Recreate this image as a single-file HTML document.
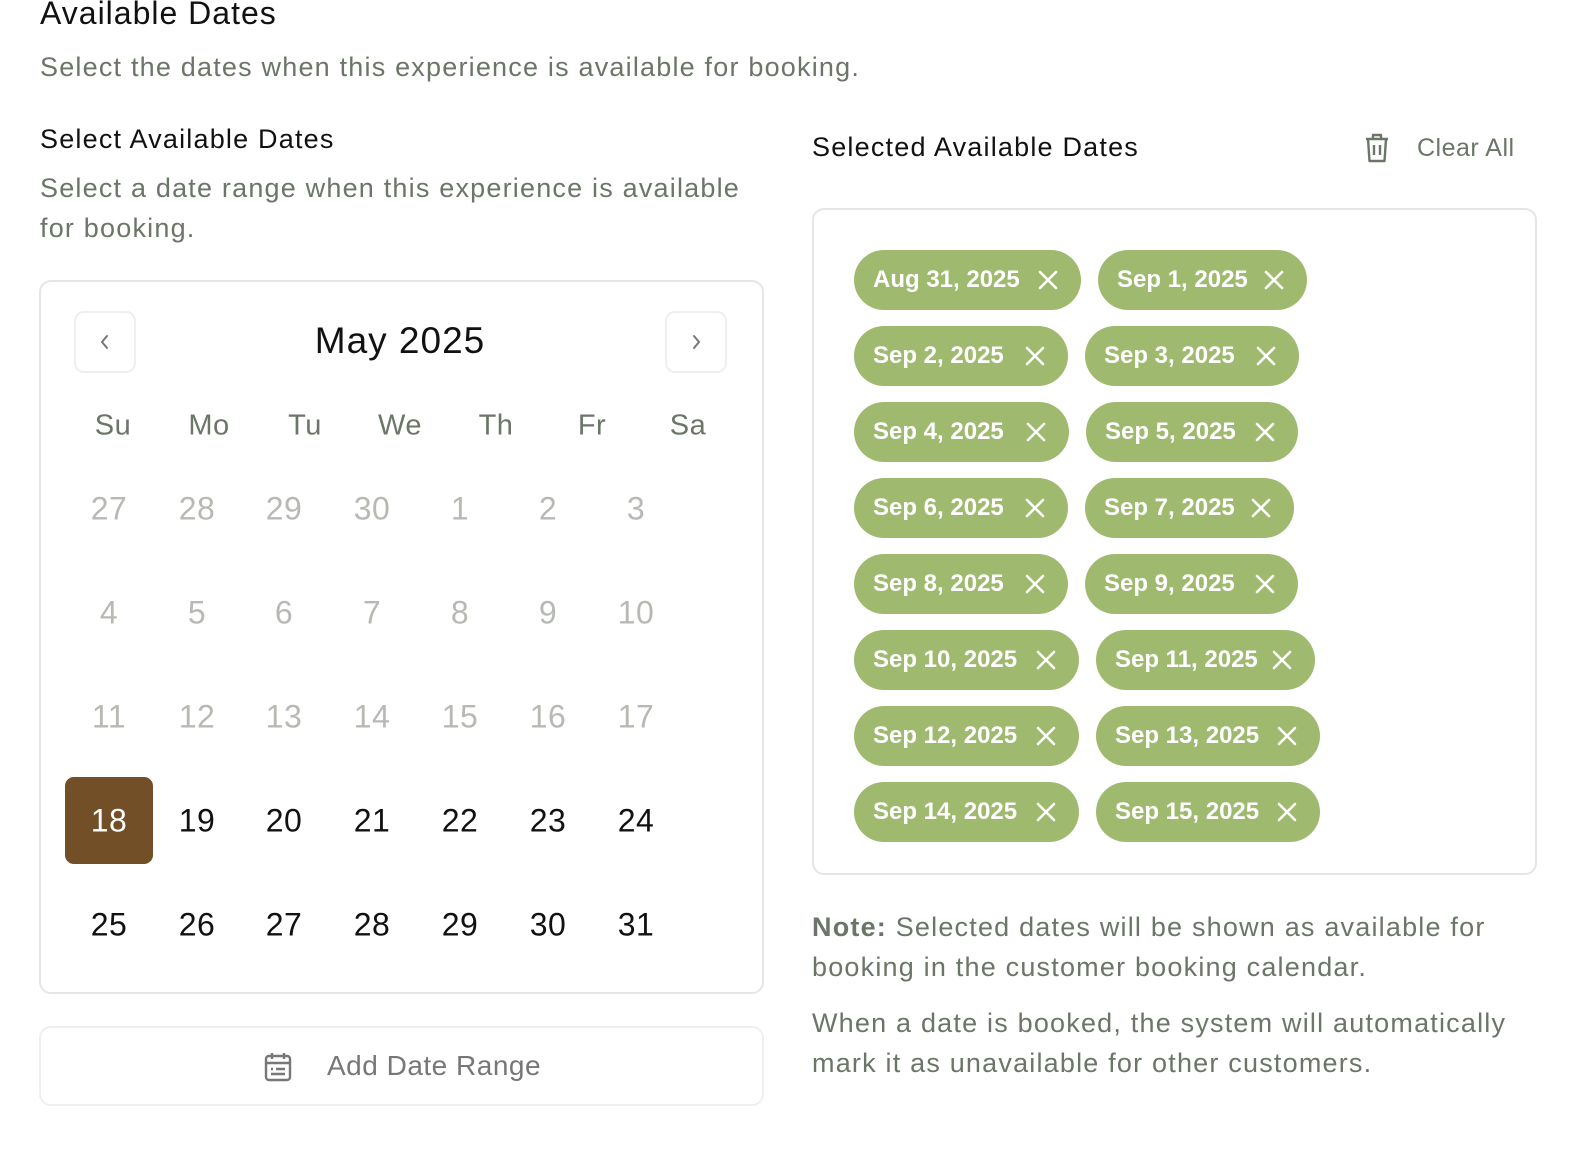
<!DOCTYPE html>
<html><head><meta charset="utf-8"><style>
*{margin:0;padding:0;box-sizing:border-box}
body{width:1570px;height:1150px;background:#fff;font-family:"Liberation Sans",sans-serif;position:relative;overflow:hidden;color:#111}
.a{position:absolute;white-space:nowrap}
.g{color:#6b7568}
.t26{font-size:27px;letter-spacing:1.2px}
.box{position:absolute;border:2px solid #e6e6e6;border-radius:12px}
.nav{position:absolute;width:62px;height:62px;border:2px solid #efefef;border-radius:10px;display:flex;align-items:center;justify-content:center}
.c{position:absolute;width:88px;text-align:center;transform:translate(-44px,-50%);font-size:32px;letter-spacing:0.5px}
.dn{color:#6b7568;font-size:29px}
.m{color:#b6bab3}
.chip{position:absolute;height:60px;background:#9fba6f;border-radius:30px;color:#fff;font-size:24px;font-weight:bold;display:flex;align-items:center;padding-left:19px}
.chip svg{position:absolute;right:22px;top:19px}
</style></head><body>
<div class="a" style="left:40px;top:-5px;font-size:32px;letter-spacing:1px">Available Dates</div>
<div class="a g t26" style="left:40px;top:52px">Select the dates when this experience is available for booking.</div>
<div class="a t26" style="left:40px;top:124px">Select Available Dates</div>
<div class="a g t26" style="left:40px;line-height:40px;white-space:normal;width:720px;top:168px">Select a date range when this experience is available for booking.</div>

<div class="box" style="left:39px;top:280px;width:725px;height:714px"></div>
<div class="nav" style="left:74px;top:311px"><svg width="20" height="20" viewBox="0 0 20 20"><path d="M12 4L7 10l5 6" fill="none" stroke="#777" stroke-width="2" stroke-linecap="round"/></svg></div>
<div class="nav" style="left:665px;top:311px"><svg width="20" height="20" viewBox="0 0 20 20"><path d="M8 4l5 6-5 6" fill="none" stroke="#777" stroke-width="2" stroke-linecap="round"/></svg></div>
<div class="a" style="left:0;width:800px;text-align:center;top:320px;font-size:37px;letter-spacing:1px">May 2025</div>

<div style="position:absolute;left:65px;top:777px;width:88px;height:87px;background:#724f26;border-radius:9px"></div>
<div id="cal"></div>

<div class="a t26" style="left:812px;top:132px">Selected Available Dates</div>
<svg class="a" style="left:1363px;top:132px" width="28" height="32" viewBox="0 0 28 32"><path d="M3 7h22M10 7V3h8v4M5 7l1.5 22h15L23 7M11 13v10M17 13v10" fill="none" stroke="#6b7568" stroke-width="2.4" stroke-linejoin="round"/></svg>
<div class="a g" style="left:1417px;top:134px;font-size:25px;letter-spacing:0.5px">Clear All</div>
<div class="box" style="left:812px;top:208px;width:725px;height:667px"></div>
<div id="chips"></div>

<div class="a g t26" style="left:812px;top:907px;line-height:40px"><b>Note:</b> Selected dates will be shown as available for<br>booking in the customer booking calendar.</div>
<div class="a g t26" style="left:812px;top:1003px;line-height:40px">When a date is booked, the system will automatically<br>mark it as unavailable for other customers.</div>

<div class="box" style="left:39px;top:1026px;width:725px;height:80px;border-color:#efefef"></div>
<svg class="a" style="left:263px;top:1051px" width="30" height="32" viewBox="0 0 30 32"><rect x="3" y="5" width="24" height="24" rx="3" fill="none" stroke="#777" stroke-width="2.4"/><path d="M3 12h24M9 2v6M21 2v6M8 18h2M13 18h9M8 23h14" stroke="#777" stroke-width="2.4"/></svg>
<div class="a" style="left:327px;top:1050px;font-size:28px;color:#777;letter-spacing:0.5px">Add Date Range</div>

<script>
var xs=[109,197,284,372,460,548,636],dx=[113,209,305,400,496,592,688],h='';
['Su','Mo','Tu','We','Th','Fr','Sa'].forEach(function(d,i){h+='<div class="c dn" style="left:'+dx[i]+'px;top:426px">'+d+'</div>'});
var rows=[[27,28,29,30,1,2,3],[4,5,6,7,8,9,10],[11,12,13,14,15,16,17],[18,19,20,21,22,23,24],[25,26,27,28,29,30,31]];
rows.forEach(function(r,j){r.forEach(function(d,i){var cls=j<3?'c m':'c';var st=(j==3&&i==0)?'color:#fff;':'';h+='<div class="'+cls+'" style="'+st+'left:'+xs[i]+'px;top:'+(509+104*j)+'px">'+d+'</div>'})});
document.getElementById('cal').innerHTML=h;
var ch=[["Aug 31, 2025",854,1081,"Sep 1, 2025",1098,1307],["Sep 2, 2025",854,1068,"Sep 3, 2025",1085,1299],["Sep 4, 2025",854,1069,"Sep 5, 2025",1086,1298],["Sep 6, 2025",854,1068,"Sep 7, 2025",1085,1294],["Sep 8, 2025",854,1068,"Sep 9, 2025",1085,1298],["Sep 10, 2025",854,1079,"Sep 11, 2025",1096,1315],["Sep 12, 2025",854,1079,"Sep 13, 2025",1096,1320],["Sep 14, 2025",854,1079,"Sep 15, 2025",1096,1320]];
var x='<svg width="22" height="22" viewBox="0 0 22 22"><path d="M3 3l16 16M19 3L3 19" stroke="#fff" stroke-width="2.6" stroke-linecap="round"/></svg>';
h='';
ch.forEach(function(c,j){var y=250+76*j;h+='<div class="chip" style="left:'+c[1]+'px;top:'+y+'px;width:'+(c[2]-c[1])+'px">'+c[0]+x+'</div>';h+='<div class="chip" style="left:'+c[4]+'px;top:'+y+'px;width:'+(c[5]-c[4])+'px">'+c[3]+x+'</div>'});
document.getElementById('chips').innerHTML=h;
</script>
</body></html>
